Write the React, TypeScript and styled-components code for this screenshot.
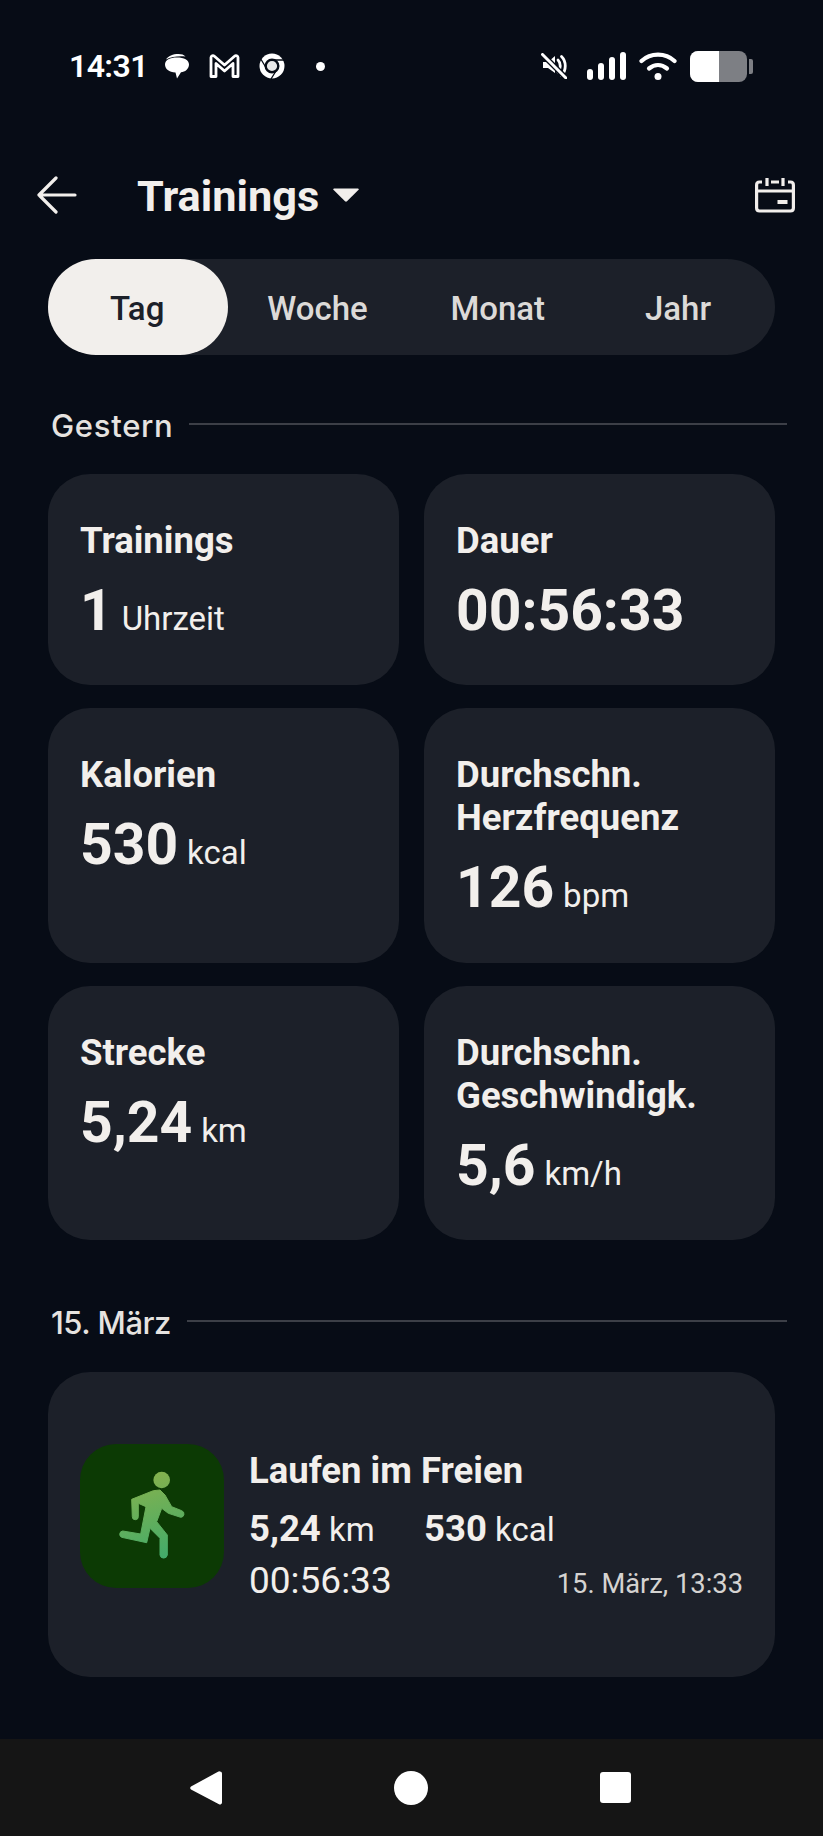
import React from "react";
import styled, { createGlobalStyle } from "styled-components";

const Global = createGlobalStyle`
  html, body { margin: 0; padding: 0; background: #070c16; }
  * { box-sizing: border-box; }
`;

const Page = styled.div`
  width: 823px;
  height: 1836px;
  background: #070c16;
  color: #f2efec;
  font-family: Roboto, "Liberation Sans", sans-serif;
  display: flex;
  flex-direction: column;
  overflow: hidden;
`;

const StatusBar = styled.div`
  height: 32px;
  margin-top: 50px;
  padding: 0 70px 0 69px;
  display: flex;
  align-items: center;
  justify-content: space-between;
  color: #fff;
`;
const StatusGroup = styled.div`
  display: flex;
  align-items: center;
  gap: 13px;
`;
const LeftIcons = styled(StatusGroup)`
  gap: 19px;
`;
const Clock = styled.span`
  font-size: 32px;
  font-weight: 600;
  line-height: 32px;
  letter-spacing: -0.6px;
  width: 76px;
  white-space: nowrap;
`;
const Dot = styled.span`
  width: 9px;
  height: 9px;
  border-radius: 50%;
  background: #fff;
  margin-left: 12px;
`;
const MuteSlot = styled.div`
  display: flex;
  margin-right: 7px;
`;

const Header = styled.div`
  height: 64px;
  margin-top: 81px;
  padding: 0 28px 0 37px;
  display: flex;
  align-items: center;
`;
const Title = styled.h1`
  margin: 4px 14px 0 60px;
  font-size: 43.300px;
  font-weight: 700;
  line-height: 60px;
`;
const CalendarSlot = styled.div`
  margin-left: auto;
  display: flex;
`;

const Content = styled.div`
  padding: 0 48px;
  display: flex;
  flex-direction: column;
`;
const Tabs = styled.div`
  margin-top: 32px;
  height: 96px;
  background: #1c2029;
  border-radius: 48px;
  display: grid;
  grid-template-columns: repeat(4, 180.300px);
`;
const Tab = styled.div<{ $active?: boolean }>`
  display: flex;
  align-items: center;
  justify-content: center;
  border-radius: 48px;
  padding: 3px 2px 0 0;
  font-size: 33px;
  font-weight: 500;
  background: ${(p) => (p.$active ? "#f2efec" : "transparent")};
  color: ${(p) => (p.$active ? "#1c2029" : "#dcdad8")};
`;

const SectionHead = styled.div<{ $top: number }>`
  margin-top: ${(p) => p.$top}px;
  margin-right: -12px;
  height: 40px;
  display: flex;
  align-items: center;
  gap: 16px;
`;
const SectionLabel = styled.span<{ $tracking: number }>`
  font-family: Inter, "Open Sans", sans-serif;
  font-size: 31px;
  font-weight: 500;
  margin-left: 3px;
  letter-spacing: ${(p) => p.$tracking}px;
  color: #e6e3e0;
  white-space: nowrap;
`;
const Line = styled.span`
  flex: 1;
  height: 2px;
  margin-top: -3px;
  background: #3c3f47;
`;

const Grid = styled.div`
  margin-top: 29px;
  display: grid;
  grid-template-columns: 1fr 1fr;
  gap: 23px 25px;
`;
const Card = styled.div<{ $h: number }>`
  height: ${(p) => p.$h}px;
  background: #1c2029;
  border-radius: 42px;
  padding: 45px 32px 0;
`;
const Label = styled.div`
  font-size: 36.500px;
  font-weight: 700;
  line-height: 43px;
`;
const Value = styled.div`
  margin-top: 16px;
  display: flex;
  align-items: baseline;
  gap: 9px;
  line-height: 66px;
`;
const Big = styled.span`
  font-size: 57px;
  font-weight: 700;
`;
const Unit = styled.span`
  font-size: 33px;
  font-weight: 400;
`;

const ActivityCard = styled.div`
  margin-top: 30px;
  height: 305px;
  background: #1c2029;
  border-radius: 42px;
  padding: 72px 32px 0;
  display: flex;
  gap: 25px;
`;
const IconBox = styled.div`
  width: 144px;
  height: 144px;
  flex: none;
  border-radius: 36px;
  background: #0c3a04;
`;
const ActivityBody = styled.div`
  flex: 1;
  padding-top: 2px;
  display: flex;
  flex-direction: column;
`;
const ActivityTitle = styled.div`
  font-size: 36.500px;
  font-weight: 700;
  line-height: 50px;
`;
const StatRow = styled.div`
  margin-top: 8px;
  display: flex;
  align-items: baseline;
  line-height: 50px;
`;
const Stat = styled.span`
  width: 175px;
  font-size: 33px;
  white-space: nowrap;
`;
const StatStrong = styled.b`
  font-size: 36.500px;
  font-weight: 700;
`;
const TimeRow = styled.div`
  display: flex;
  align-items: baseline;
  justify-content: space-between;
  line-height: 52px;
`;
const Duration = styled.span`
  font-size: 37px;
  font-weight: 400;
`;
const DateText = styled.span`
  font-size: 27.300px;
  color: #d5d3d1;
`;

const NavBar = styled.div`
  margin-top: auto;
  height: 97px;
  background: #151515;
  padding: 0 192px 0 190px;
  display: flex;
  align-items: center;
  justify-content: space-between;
`;

const ChatIcon = () => (
  <svg width="26" height="26" viewBox="0 0 26 26" fill="#fff">
    <path d="M2 6.500C4 3 9 1 14.500 1c3 0 5.500.8 7 2.500C16 2.600 7 3.500 2 6.500z" />
    <path d="M13 4.500c7 0 12 2.500 12 7s-4 7.500-8 7.800L13 25.500l-1.500-6C5 19 1 16 1 11.500s5-7 12-7z" />
  </svg>
);
const GmailIcon = () => (
  <svg width="31" height="24" viewBox="0 0 31 24" fill="none" stroke="#fff" strokeWidth="2.800" strokeLinejoin="round">
    <path d="M2 22.500V3.500c0-1.700 2-2.500 3.400-1.300L15.500 11l10-8.800c1.400-1.200 3.500-.4 3.500 1.300v19h-5V9.500L15.500 17 7 9.500v13z" />
  </svg>
);
const ChromeIcon = () => (
  <svg width="26" height="26" viewBox="0 0 26 26" fill="none">
    <circle cx="13" cy="13" r="12.500" fill="#fff" />
    <path d="M13 7H25M7.800 16 1.800 6M18.200 16 12 26" stroke="#070c16" strokeWidth="1.300" />
    <circle cx="13" cy="13" r="6.300" fill="#e8e8e8" stroke="#070c16" strokeWidth="2.400" />
  </svg>
);
const MuteIcon = () => (
  <svg width="26" height="26" viewBox="0 0 26 26" fill="#fff">
    <path d="M2 9h5l7-6v17l-7-5H2z" />
    <path d="M17 7c3 3 3 9 0 12M20.500 3.500c5 5 5 14 0 19" fill="none" stroke="#fff" strokeWidth="2.800" strokeLinecap="round" />
    <path d="M1.500 1.500 25 25" stroke="#070c16" strokeWidth="5.500" />
    <path d="M1.500 1.500 25 25" stroke="#fff" strokeWidth="3" strokeLinecap="round" />
  </svg>
);
const SignalIcon = () => (
  <svg width="39" height="28" viewBox="0 0 39 28" fill="#fff">
    <rect x="0" y="17" width="6" height="11" rx="3" />
    <rect x="11" y="11" width="6" height="17" rx="3" />
    <rect x="22" y="5" width="6" height="23" rx="3" />
    <rect x="33" y="0" width="6" height="28" rx="3" />
  </svg>
);
const WifiIcon = () => (
  <svg width="38" height="28" viewBox="0 0 38 28" fill="none" stroke="#fff" strokeLinecap="round" strokeWidth="4.200">
    <path d="M2.500 9C11.500 .5 26.500 .5 35.500 9" />
    <path d="M10 16.500c5.500-4.500 12.500-4.500 18 0" />
    <circle cx="19" cy="24.500" r="3.500" fill="#fff" stroke="none" />
  </svg>
);
const BatteryIcon = () => (
  <svg width="63" height="31" viewBox="0 0 63 31">
    <rect x="0" y="0" width="57" height="31" rx="8" fill="#7d7f84" />
    <path d="M8 0h21v31H8a8 8 0 0 1-8-8V8a8 8 0 0 1 8-8z" fill="#fff" />
    <path d="M59 8h2a2 2 0 0 1 2 2v11a2 2 0 0 1-2 2h-2z" fill="#7d7f84" />
  </svg>
);
const BackArrow = () => (
  <svg width="40" height="38" viewBox="0 0 40 38" fill="none" stroke="#f2efec" strokeWidth="3.200" strokeLinecap="round" strokeLinejoin="round">
    <path d="M38 19H2M19 2 2 19l17 17" />
  </svg>
);
const Caret = () => (
  <svg width="26" height="14" viewBox="0 0 26 14" fill="#f2efec">
    <path d="M1 0.500h24a.8.8 0 0 1 .6 1.300L14 13.300a1.500 1.500 0 0 1-2 0L.4 1.800A.8.8 0 0 1 1 .500z" />
  </svg>
);
const CalendarIcon = () => (
  <svg width="40" height="36" viewBox="0 0 40 36" fill="none" stroke="#f2efec" strokeWidth="3.200">
    <path d="M7 5H4.500C2.800 5 1.600 6.200 1.600 8v23c0 1.800 1.200 3 3 3h30.800c1.800 0 3-1.200 3-3V8c0-1.800-1.200-3-3-3H33" />
    <path d="M12 1v8M28 1v8M16 5h8M2 14h36" />
    <rect x="22.500" y="23" width="10" height="4" fill="#f2efec" stroke="none" />
  </svg>
);
const Runner = () => (
  <svg width="144" height="144" viewBox="0 0 144 144">
    <defs>
      <linearGradient id="runGrad" gradientUnits="userSpaceOnUse" x1="60" y1="28" x2="85" y2="114">
        <stop offset="0" stopColor="#88b24c" />
        <stop offset="1" stopColor="#42ab6a" />
      </linearGradient>
    </defs>
    <circle cx="81.700" cy="36" r="8.300" fill="url(#runGrad)" />
    <path
      fill="url(#runGrad)"
      stroke="url(#runGrad)"
      strokeWidth="1"
      strokeLinejoin="round"
      d="M51.700 55.300 73.300 46.700 80 46 85 51 91.700 62.700 101.700 66.700A3.400 3.400 0 0 1 100.700 73.300L88.300 69.300 81.700 64.300 76.700 77.700 87.300 91V111A3.700 3.700 0 0 1 80 111V94.300L70 84.300 66.700 98.700 41.700 93.300A3.300 3.300 0 0 1 42.700 87L60.700 90 66 62.700 58.300 59.300V72.700A3 3 0 0 1 52.300 72.700z"
    />
  </svg>
);

const stats = [
  { h: 211, label: ["Trainings"], value: "1", unit: "Uhrzeit" },
  { h: 211, label: ["Dauer"], value: "00:56:33", unit: "" },
  { h: 255, label: ["Kalorien"], value: "530", unit: "kcal" },
  { h: 255, label: ["Durchschn.", "Herzfrequenz"], value: "126", unit: "bpm" },
  { h: 254, label: ["Strecke"], value: "5,24", unit: "km" },
  { h: 254, label: ["Durchschn.", "Geschwindigk."], value: "5,6", unit: "km/h" },
];

export default function App() {
  return (
    <Page>
      <Global />
      <StatusBar>
        <LeftIcons>
          <Clock>14:31</Clock>
          <ChatIcon />
          <GmailIcon />
          <ChromeIcon />
          <Dot />
        </LeftIcons>
        <StatusGroup>
          <MuteSlot>
            <MuteIcon />
          </MuteSlot>
          <SignalIcon />
          <WifiIcon />
          <BatteryIcon />
        </StatusGroup>
      </StatusBar>
      <Header>
        <BackArrow />
        <Title>Trainings</Title>
        <Caret />
        <CalendarSlot>
          <CalendarIcon />
        </CalendarSlot>
      </Header>
      <Content>
        <Tabs>
          <Tab $active>Tag</Tab>
          <Tab>Woche</Tab>
          <Tab>Monat</Tab>
          <Tab>Jahr</Tab>
        </Tabs>
        <SectionHead $top={50}>
          <SectionLabel $tracking={0.7}>Gestern</SectionLabel>
          <Line />
        </SectionHead>
        <Grid>
          {stats.map((s) => (
            <Card key={s.label.join()} $h={s.h}>
              {s.label.map((l) => (
                <Label key={l}>{l}</Label>
              ))}
              <Value>
                <Big>{s.value}</Big>
                {s.unit && <Unit>{s.unit}</Unit>}
              </Value>
            </Card>
          ))}
        </Grid>
        <SectionHead $top={62}>
          <SectionLabel $tracking={-0.5}>15. März</SectionLabel>
          <Line />
        </SectionHead>
        <ActivityCard>
          <IconBox>
            <Runner />
          </IconBox>
          <ActivityBody>
            <ActivityTitle>Laufen im Freien</ActivityTitle>
            <StatRow>
              <Stat>
                <StatStrong>5,24</StatStrong> km
              </Stat>
              <Stat>
                <StatStrong>530</StatStrong> kcal
              </Stat>
            </StatRow>
            <TimeRow>
              <Duration>00:56:33</Duration>
              <DateText>15. März, 13:33</DateText>
            </TimeRow>
          </ActivityBody>
        </ActivityCard>
      </Content>
      <NavBar>
        <svg width="32" height="36" viewBox="0 0 32 36" fill="#fff">
          <path d="M30 1.500a2 2 0 0 1 2 2v29a2 2 0 0 1-3 1.700L1 19.500a1.800 1.800 0 0 1 0-3L28 1.800a2 2 0 0 1 2-.3z" />
        </svg>
        <svg width="34" height="34" viewBox="0 0 34 34" fill="#fff">
          <circle cx="17" cy="17" r="17" />
        </svg>
        <svg width="31" height="31" viewBox="0 0 31 31" fill="#fff">
          <rect width="31" height="31" rx="3" />
        </svg>
      </NavBar>
    </Page>
  );
}
